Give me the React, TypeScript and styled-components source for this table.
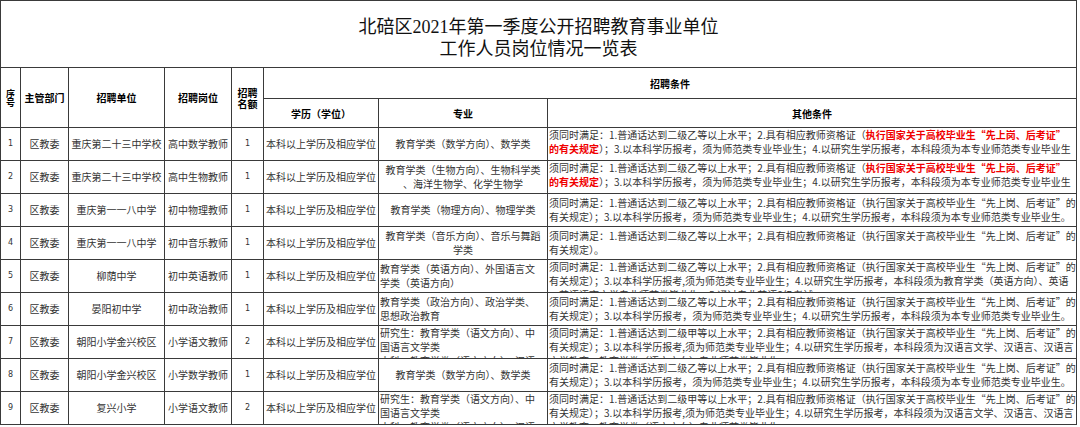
import React from "react";
import styled, { createGlobalStyle } from "styled-components";

const GlobalStyle = createGlobalStyle`
  *, *::before, *::after { box-sizing: border-box; }
  html, body { margin: 0; padding: 0; background: #ffffff; }
  body { font-family: "Noto Sans CJK SC", "Liberation Sans", sans-serif; }
`;

type Align = "left" | "center";

type Post = {
  no: number;
  school: string;
  post: string;
  count: number;
  major: string[];
  majorAlign: Align;
  other: React.ReactNode[];
};

const Red = styled.span`
  color: #f00000;
  font-weight: 700;
`;

const lineOne = (level: string) =>
  `须同时满足：1.普通话达到二级${level}等以上水平；2.具有相应教师资格证（执行国家关于高校毕业生“先上岗、后考证”的`;
const lineTwo = "有关规定）；3.以本科学历报考，须为师范类专业毕业生；4.以研究生学历报考，本科段须为本专业师范类专业毕业生。";

const redNote = [
  <>
    须同时满足：1.普通话达到二级乙等以上水平；2.具有相应教师资格证（<Red>执行国家关于高校毕业生“先上岗、后考证”</Red>
  </>,
  <>
    <Red>的有关规定</Red>）；3.以本科学历报考，须为师范类专业毕业生；4.以研究生学历报考，本科段须为本专业师范类专业毕业生
  </>,
  "。",
];

const chineseMajor = ["研究生：教育学类（语文方向）、中", "国语言文学类", "本科：教育学类（语文方向）、汉语"];
const chineseNote = [
  lineOne("甲"),
  "有关规定）；3.以本科学历报考,须为师范类专业毕业生；4.以研究生学历报考，本科段须为汉语言文学、汉语言、汉语言",
  "文学教育、教育学类（语文方向）专业师范类毕业生。",
];

const posts: Post[] = [
  { no: 1, school: "重庆第二十三中学校", post: "高中数学教师", count: 1, major: ["教育学类（数学方向）、数学类"], majorAlign: "center", other: redNote },
  { no: 2, school: "重庆第二十三中学校", post: "高中生物教师", count: 1, major: ["教育学类（生物方向）、生物科学类", "、海洋生物学、化学生物学"], majorAlign: "center", other: redNote },
  { no: 3, school: "重庆第一一八中学", post: "初中物理教师", count: 1, major: ["教育学类（物理方向）、物理学类"], majorAlign: "center", other: [lineOne("乙"), lineTwo] },
  { no: 4, school: "重庆第一一八中学", post: "初中音乐教师", count: 1, major: ["教育学类（音乐方向）、音乐与舞蹈", "学类"], majorAlign: "center", other: [lineOne("乙"), "有关规定）。"] },
  {
    no: 5, school: "柳荫中学", post: "初中英语教师", count: 1, major: ["教育学类（英语方向）、外国语言文", "学类（英语方向）"], majorAlign: "left",
    other: [
      lineOne("乙"),
      "有关规定）；3.以本科学历报考,须为师范类专业毕业生；4.以研究生学历报考，本科段须为教育学类（英语方向）、英语",
      "、英语语言文学专业师范类毕业生；5.通过专业英语8级考试。",
    ],
  },
  { no: 6, school: "晏阳初中学", post: "初中政治教师", count: 1, major: ["教育学类（政治方向）、政治学类、", "思想政治教育"], majorAlign: "left", other: [lineOne("乙"), lineTwo] },
  { no: 7, school: "朝阳小学金兴校区", post: "小学语文教师", count: 2, major: chineseMajor, majorAlign: "left", other: chineseNote },
  { no: 8, school: "朝阳小学金兴校区", post: "小学数学教师", count: 1, major: ["教育学类（数学方向）、数学类"], majorAlign: "center", other: [lineOne("乙"), lineTwo] },
  { no: 9, school: "复兴小学", post: "小学语文教师", count: 2, major: chineseMajor, majorAlign: "left", other: chineseNote },
];

const App = () => {
  return (
    <>
      <GlobalStyle />
      <Sheet>
        <Title>
          <div>北碚区2021年第一季度公开招聘教育事业单位</div>
          <div>工作人员岗位情况一览表</div>
        </Title>

        <HeadCell $rows={2} $tight>
          <div>序</div>
          <div>号</div>
        </HeadCell>
        <HeadCell $rows={2}>主管部门</HeadCell>
        <HeadCell $rows={2}>招聘单位</HeadCell>
        <HeadCell $rows={2}>招聘岗位</HeadCell>
        <HeadCell $rows={2}>
          <div>招聘</div>
          <div>名额</div>
        </HeadCell>
        <HeadCell $cols={3}>招聘条件</HeadCell>
        <HeadCell>学历（学位）</HeadCell>
        <HeadCell>专业</HeadCell>
        <HeadCell>其他条件</HeadCell>

        {posts.map((p) => (
          <React.Fragment key={p.no}>
            <NumCell>{p.no}</NumCell>
            <Cell>区教委</Cell>
            <Cell>{p.school}</Cell>
            <Cell>{p.post}</Cell>
            <NumCell>{p.count}</NumCell>
            <Cell>本科以上学历及相应学位</Cell>
            <Cell $align={p.majorAlign}>
              {p.major.map((line, i) => (
                <Line key={i}>{line}</Line>
              ))}
            </Cell>
            <Cell $align="left">
              {p.other.map((line, i) => (
                <Line key={i}>{line}</Line>
              ))}
            </Cell>
          </React.Fragment>
        ))}
      </Sheet>
    </>
  );
};

const Sheet = styled.div`
  display: grid;
  grid-template-columns: 19px 47px 95px 66px 31px 114px 168px 528px;
  grid-template-rows: 66px 30px 28px repeat(9, 32px);
  gap: 1px;
  padding: 1px;
  width: max-content;
  background: #3a3a3a;
`;

const Title = styled.div`
  grid-column: 1 / -1;
  display: flex;
  flex-direction: column;
  align-items: center;
  justify-content: center;
  padding-top: 8px;
  background: #ffffff;
  color: #111111;
  font-family: "Liberation Serif", "Noto Sans CJK SC", serif;
  font-size: 18px;
  line-height: 22px;
`;

const HeadCell = styled.div<{ $rows?: number; $cols?: number; $tight?: boolean }>`
  grid-row: span ${({ $rows }) => $rows ?? 1};
  grid-column: span ${({ $cols }) => $cols ?? 1};
  display: flex;
  flex-direction: column;
  align-items: center;
  justify-content: center;
  overflow: hidden;
  background: #ffffff;
  color: #000000;
  font-size: ${({ $tight }) => ($tight ? "9px" : "10px")};
  line-height: ${({ $tight }) => ($tight ? "9px" : "11px")};
  font-weight: 700;
  white-space: nowrap;
`;

const Cell = styled.div<{ $align?: Align }>`
  display: flex;
  flex-direction: column;
  align-items: ${({ $align }) => ($align === "left" ? "flex-start" : "center")};
  justify-content: safe center;
  overflow: hidden;
  padding: 0 1px;
  background: #ffffff;
  color: #333333;
  font-size: 10px;
  line-height: 14px;
  white-space: nowrap;
`;

const NumCell = styled(Cell)`
  font-family: "DejaVu Sans", "Liberation Sans", sans-serif;
  font-size: 8px;
`;

const Line = styled.div`
  flex: none;
`;

export default App;
